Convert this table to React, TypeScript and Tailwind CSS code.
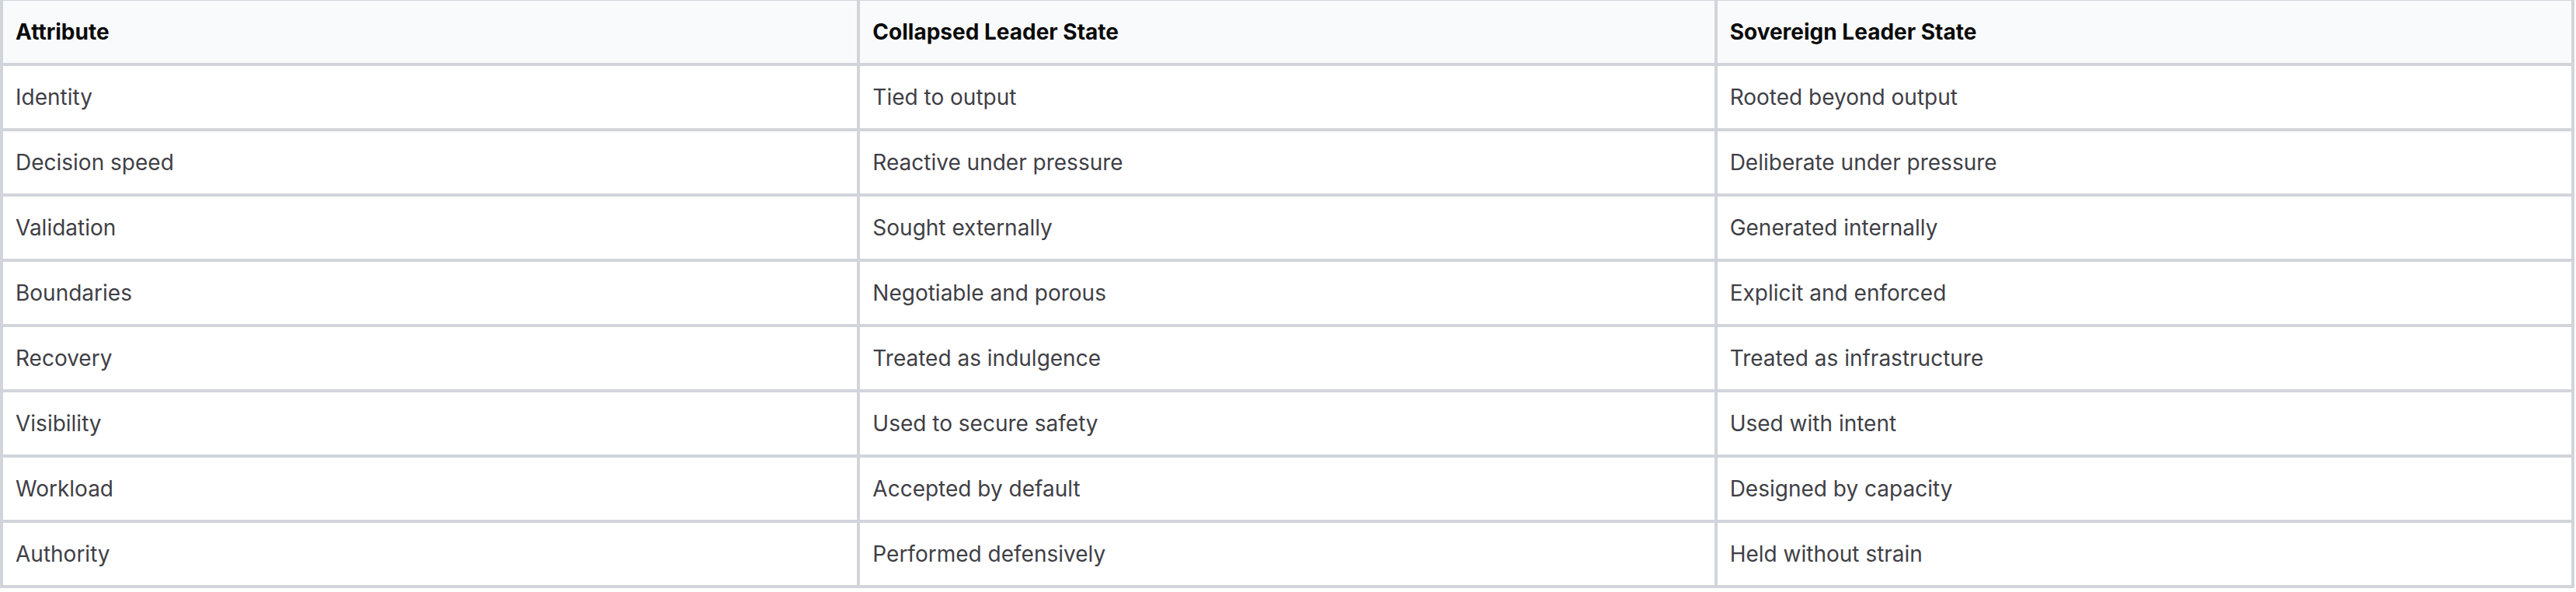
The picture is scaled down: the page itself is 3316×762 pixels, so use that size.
const rows: [string, string, string][] = [
  ['Identity', 'Tied to output', 'Rooted beyond output'],
  ['Decision speed', 'Reactive under pressure', 'Deliberate under pressure'],
  ['Validation', 'Sought externally', 'Generated internally'],
  ['Boundaries', 'Negotiable and porous', 'Explicit and enforced'],
  ['Recovery', 'Treated as indulgence', 'Treated as infrastructure'],
  ['Visibility', 'Used to secure safety', 'Used with intent'],
  ['Workload', 'Accepted by default', 'Designed by capacity'],
  ['Authority', 'Performed defensively', 'Held without strain'],
]

const headers = ['Attribute', 'Collapsed Leader State', 'Sovereign Leader State']

export default function App() {
  return (
    <div className="min-h-screen bg-white font-['Inter',sans-serif]">
      <table className="w-[3314px] table-fixed border-separate border-spacing-0 border-l-4 border-t border-[#d1d5db] text-left">
        <thead>
          <tr className="bg-[#f9fafb]">
            {headers.map((h) => (
              <th
                key={h}
                className="h-[84px] border-b-4 border-r-4 border-[#d1d5db] px-4 align-middle text-[28px] font-bold leading-[48px] text-[#0a0a0a]"
              >
                {h}
              </th>
            ))}
          </tr>
        </thead>
        <tbody>
          {rows.map((r) => (
            <tr key={r[0]}>
              {r.map((c, i) => (
                <td
                  key={i}
                  className="h-[84px] border-b-4 border-r-4 border-[#d1d5db] px-4 align-middle text-[28px] leading-[48px] text-[#3f3f46]"
                >
                  {c}
                </td>
              ))}
            </tr>
          ))}
        </tbody>
      </table>
    </div>
  )
}
